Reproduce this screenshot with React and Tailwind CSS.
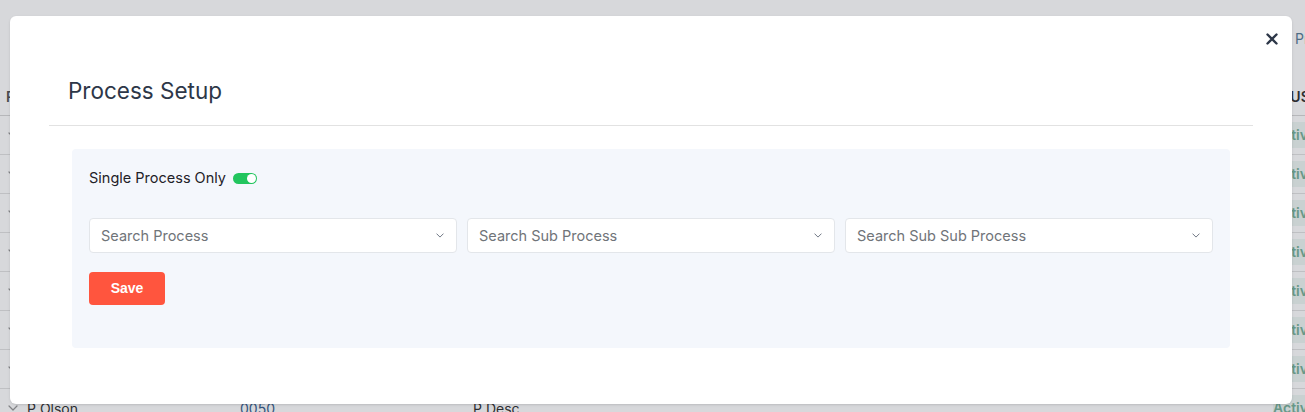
import React, { useState } from 'react';

const rows = [
  { name: 'A Brown', code: '0010', desc: 'A Desc' },
  { name: 'B Clark', code: '0015', desc: 'B Desc' },
  { name: 'C Davis', code: '0020', desc: 'C Desc' },
  { name: 'D Evans', code: '0025', desc: 'D Desc' },
  { name: 'J Moore', code: '0030', desc: 'J Desc' },
  { name: 'L Nolan', code: '0035', desc: 'L Desc' },
  { name: 'M Owens', code: '0040', desc: 'M Desc' },
  { name: 'P Olson', code: '0050', desc: 'P Desc' },
];

// Small chevron used in the selects and the table rows
const Chevron = ({ className }) => (
  <svg viewBox="0 0 10 6" className={className} fill="none" stroke="currentColor" strokeWidth="1.2">
    <path d="M1 1l4 4 4-4" strokeLinecap="round" strokeLinejoin="round" />
  </svg>
);

const SelectBox = ({ placeholder }) => (
  <div className="flex-1 h-[35px] bg-white border border-[#e3e6ea] rounded-[4px] flex items-center justify-between pl-[11px] pr-[12px]">
    <span className="text-[14.5px] text-[#707479]">{placeholder}</span>
    <Chevron className="w-[8px] h-[5px] text-[#6b7280]" />
  </div>
);

const App = () => {
  const [single, setSingle] = useState(true);

  return (
    <div className="relative h-[412px] overflow-hidden bg-white" style={{ fontFamily: 'Inter, "Noto Sans", sans-serif' }}>
      {/* Page behind the modal */}
      <div className="h-[78px] pt-[26px] pl-[1295px] whitespace-nowrap">
        <span className="text-[14px] text-[#5a7f98]">Process</span>
      </div>
      <div className="text-[14px] text-[#333] whitespace-nowrap">
        <div className="h-[38px] flex items-center border-b border-[#d8d8d8] font-semibold text-[#555]">
          <span className="w-[240px] shrink-0 pl-[6px]">Process Name</span>
          <span className="w-[233px] shrink-0">Code</span>
          <span className="flex-1">Description</span>
          <span className="w-[50px] shrink-0 text-[#333]">STATUS</span>
        </div>
        {rows.map((r, i) => (
          <div key={i} className="h-[39px] flex items-center border-b border-[#e2e2e2]">
            <span className="w-[240px] shrink-0 pl-[8px] flex items-center gap-[9px]">
              <Chevron className="w-[10px] h-[6px] text-[#999]" />
              {r.name}
            </span>
            <span className="w-[233px] shrink-0 text-[#3b5f8f]">{r.code}</span>
            <span className="flex-1">{r.desc}</span>
            <span className="w-[32px] shrink-0 h-[26px] leading-[26px] text-[#7ab29c] font-semibold bg-[#eef7f3]">Active</span>
          </div>
        ))}
      </div>

      {/* Overlay */}
      <div className="absolute inset-0 bg-[rgba(17,24,39,0.17)]">
        <div className="absolute left-[10px] top-[16px] w-[1282px] h-[388px] bg-white rounded-[6px] shadow-sm px-[39px]">
          <button className="absolute right-[13px] top-[16px] w-[14px] h-[14px] flex items-center justify-center text-[#2d3748]">
            <svg viewBox="0 0 12 12" className="w-[12px] h-[12px]" stroke="currentColor" strokeWidth="2.4" strokeLinecap="round">
              <path d="M1.5 1.5l9 9M10.5 1.5l-9 9" />
            </svg>
          </button>

          <div className="pt-[60px] pb-[19px] px-[19px] border-b border-[#e2e2e2]">
            <h2 className="text-[22.5px] leading-[30px] text-[#2d3748] font-normal">Process Setup</h2>
          </div>

          <div className="px-[23px] pt-[23px]">
            <div className="bg-[#f4f7fc] rounded-[4px] px-[17px] pt-[19px] pb-[43px]">
              <div className="h-[20px] flex items-center gap-[7px]">
                <span className="text-[14.5px] text-[#1f2228]">Single Process Only</span>
                <button
                  onClick={() => setSingle(!single)}
                  className={`w-[24px] h-[11px] rounded-full relative ${single ? 'bg-[#22c55e]' : 'bg-gray-300'}`}
                >
                  <span className={`absolute top-[1px] w-[9px] h-[9px] rounded-full bg-white ${single ? 'right-[1px]' : 'left-[1px]'}`} />
                </button>
              </div>

              <div className="flex gap-[10px] mt-[30px]">
                <SelectBox placeholder="Search Process" />
                <SelectBox placeholder="Search Sub Process" />
                <SelectBox placeholder="Search Sub Sub Process" />
              </div>

              <button
                className="mt-[19px] w-[76px] h-[33px] rounded-[4px] bg-[#ff553e] text-white text-[14px] font-bold"
                style={{ fontFamily: '"Liberation Sans", Arial, sans-serif' }}
              >
                Save
              </button>
            </div>
          </div>
        </div>
      </div>
    </div>
  );
};

export default App;
